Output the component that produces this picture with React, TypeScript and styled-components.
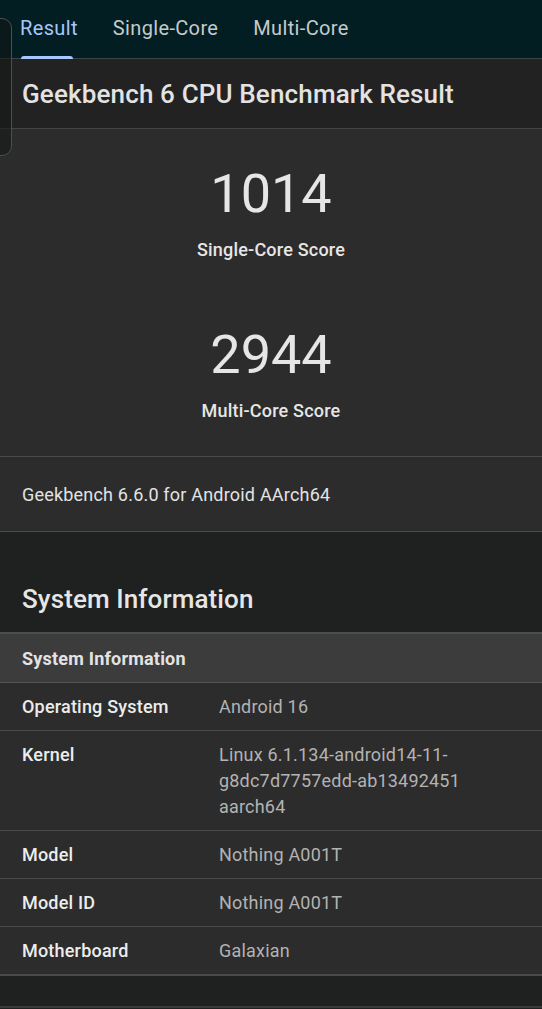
import styled, { createGlobalStyle } from 'styled-components'

const GlobalStyle = createGlobalStyle`
  html, body {
    margin: 0;
    padding: 0;
    background: #1f2020;
    font-family: Roboto, "Noto Sans", "Liberation Sans", sans-serif;
    color: #e3e3e3;
  }
`

const Page = styled.div`
  position: relative;
  width: 542px;
  min-height: 1009px;
  background: #1f2020;
  overflow: hidden;
`

const TabBar = styled.div`
  display: flex;
  gap: 35px;
  height: 58px;
  padding: 0 20px;
  background: #021e22;
  border-bottom: 1px solid #3b4446;
`

const Tab = styled.div<{ $active?: boolean }>`
  position: relative;
  display: flex;
  align-items: center;
  font-size: 20px;
  letter-spacing: 0.35px;
  padding-bottom: 2px;
  color: ${p => (p.$active ? '#a8c7fa' : '#c4cbcc')};
  &::after {
    content: '';
    display: ${p => (p.$active ? 'block' : 'none')};
    position: absolute;
    left: 1px;
    right: 5px;
    bottom: -1px;
    height: 3px;
    border-radius: 3px 3px 0 0;
    background: #a8c7fa;
  }
`

const Card = styled.section`
  background: #2c2c2c;
`

const CardTitle = styled.h1`
  margin: 0;
  padding: 0 22px;
  height: 69px;
  display: flex;
  align-items: center;
  font-size: 26px;
  letter-spacing: 0.15px;
  font-weight: 500;
  background: #222222;
  border-bottom: 1px solid #444;
`

const Scores = styled.div`
  display: flex;
  flex-direction: column;
  align-items: center;
  padding: 33px 0 35px;
  gap: 63px;
  border-bottom: 1px solid #4a4a4a;
`

const Score = styled.div`
  display: flex;
  flex-direction: column;
  align-items: center;
`

const ScoreValue = styled.div`
  font-size: 54px;
  line-height: 64px;
  color: #e6e6e6;
`

const ScoreLabel = styled.div`
  font-size: 18px;
  letter-spacing: 0.2px;
  font-weight: 500;
  margin-top: 13px;
  color: #e6e6e6;
`

const Version = styled.div`
  padding: 0 22px;
  height: 74px;
  display: flex;
  align-items: center;
  font-size: 18px;
  letter-spacing: 0.2px;
  color: #e3e3e3;
  border-bottom: 1px solid #4a4a4a;
`

const SectionTitle = styled.h2`
  margin: 0;
  padding: 0 22px 18px;
  height: 100px;
  display: flex;
  align-items: flex-end;
  box-sizing: border-box;
  font-size: 26px;
  letter-spacing: 0.1px;
  font-weight: 500;
  color: #e6e6e6;
`

const Table = styled.div`
  border-top: 2px solid #4d4d4d;
  border-bottom: 2px solid #4a4a4a;
  background: #2c2c2c;
`

const TableHead = styled.div`
  background: #3c3c3c;
  height: 48px;
  padding: 0 22px;
  display: flex;
  align-items: center;
  font-size: 18px;
  letter-spacing: 0.2px;
  font-weight: 700;
  color: #e3e3e3;
  border-bottom: 1px solid #555;
`

const Row = styled.div`
  display: grid;
  grid-template-columns: 197px 1fr;
  padding: 11px 22px 10px;
  font-size: 18px;
  letter-spacing: 0.2px;
  line-height: 26px;
  & + & {
    border-top: 1px solid #4a4a4a;
  }
`

const Label = styled.div`
  font-weight: 500;
  color: #ececec;
`

const Value = styled.div`
  color: #b3b3b3;
  word-break: break-all;
`

const EdgeHandle = styled.div`
  position: absolute;
  left: -14px;
  top: 18px;
  width: 24px;
  height: 136px;
  border: 1px solid #4a4f50;
  border-radius: 10px;
  background: rgba(20, 22, 22, 0.55);
`

const BottomLine = styled.div`
  margin-top: 30px;
  height: 2px;
  background: #3a3a3a;
`

const rows: [string, string[]][] = [
  ['Operating System', ['Android 16']],
  ['Kernel', ['Linux 6.1.134-android14-11-', 'g8dc7d7757edd-ab13492451', 'aarch64']],
  ['Model', ['Nothing A001T']],
  ['Model ID', ['Nothing A001T']],
  ['Motherboard', ['Galaxian']],
]

export default function App() {
  return (
    <Page>
      <GlobalStyle />
      <TabBar>
        <Tab $active>Result</Tab>
        <Tab>Single-Core</Tab>
        <Tab>Multi-Core</Tab>
      </TabBar>
      <Card>
        <CardTitle>Geekbench 6 CPU Benchmark Result</CardTitle>
        <Scores>
          <Score>
            <ScoreValue>1014</ScoreValue>
            <ScoreLabel>Single-Core Score</ScoreLabel>
          </Score>
          <Score>
            <ScoreValue>2944</ScoreValue>
            <ScoreLabel>Multi-Core Score</ScoreLabel>
          </Score>
        </Scores>
        <Version>Geekbench 6.6.0 for Android AArch64</Version>
      </Card>
      <SectionTitle>System Information</SectionTitle>
      <Table>
        <TableHead>System Information</TableHead>
        {rows.map(([label, lines]) => (
          <Row key={label}>
            <Label>{label}</Label>
            <Value>
              {lines.map(l => (
                <div key={l}>{l}</div>
              ))}
            </Value>
          </Row>
        ))}
      </Table>
      <BottomLine />
      <EdgeHandle />
    </Page>
  )
}
